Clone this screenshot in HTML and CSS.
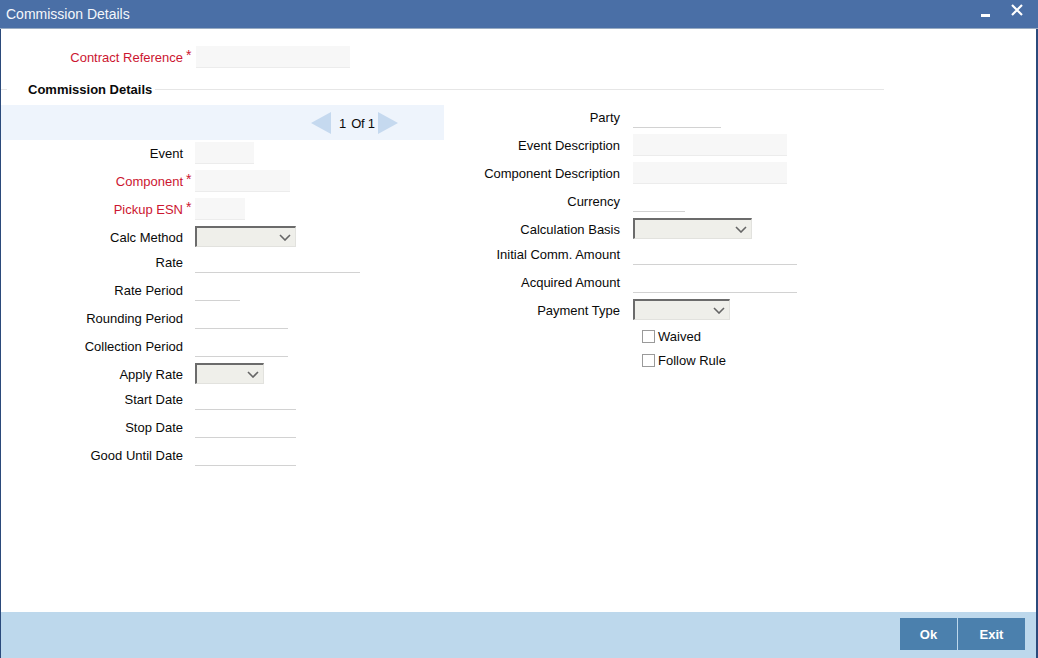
FILE: index.html
```html
<!DOCTYPE html>
<html>
<head>
<meta charset="utf-8">
<title>Commission Details</title>
<link rel="stylesheet" href="styles.css">
</head>
<body>
<div class="window">
  <div class="titlebar">
    <span class="title">Commission Details</span>
    <div class="win-ctrls">
      <span class="min-btn"></span>
      <svg class="close-btn" width="14" height="14" viewBox="0 0 14 14"><path d="M2 2 L12 12 M12 2 L2 12" stroke="#ffffff" stroke-width="2.2" fill="none"/></svg>
    </div>
  </div>
  <div class="frame">
    <div class="main">
      <div class="frow contract">
        <span class="lbl req">Contract Reference</span><span class="mark">*</span>
        <div class="inp filled" style="width:154px"></div>
      </div>
      <div class="legend">
        <span class="lline-s"></span>
        <span class="legend-text">Commission Details</span>
        <span class="lline"></span>
      </div>
      <div class="cols">
        <div class="col-left">
          <div class="pager">
            <svg class="arrow" width="20" height="22" viewBox="0 0 20 22"><path d="M20 0 L20 22 L0 11 Z" fill="#c5d9ef"/></svg>
            <span class="pg-num">1</span><span class="pg-of">Of 1</span>
            <svg class="arrow" width="20" height="22" viewBox="0 0 20 22"><path d="M0 0 L0 22 L20 11 Z" fill="#c5d9ef"/></svg>
          </div>
          <div class="form">
            <div class="frow"><span class="lbl">Event</span><span class="mark"></span><div class="inp filled" style="width:59px"></div></div>
            <div class="frow"><span class="lbl req">Component</span><span class="mark">*</span><div class="inp filled" style="width:95px"></div></div>
            <div class="frow"><span class="lbl req">Pickup ESN</span><span class="mark">*</span><div class="inp filled" style="width:50px"></div></div>
            <div class="frow srow"><span class="lbl">Calc Method</span><span class="mark"></span><div class="sel" style="width:101px"><svg width="12" height="7" viewBox="0 0 12 7"><path d="M1 1 L6 6 L11 1" stroke="#666" stroke-width="1.6" fill="none"/></svg></div></div>
            <div class="frow"><span class="lbl">Rate</span><span class="mark"></span><div class="inp uline" style="width:165px"></div></div>
            <div class="frow"><span class="lbl">Rate Period</span><span class="mark"></span><div class="inp uline" style="width:45px"></div></div>
            <div class="frow"><span class="lbl">Rounding Period</span><span class="mark"></span><div class="inp uline" style="width:93px"></div></div>
            <div class="frow"><span class="lbl">Collection Period</span><span class="mark"></span><div class="inp uline" style="width:93px"></div></div>
            <div class="frow srow"><span class="lbl">Apply Rate</span><span class="mark"></span><div class="sel" style="width:69px"><svg width="12" height="7" viewBox="0 0 12 7"><path d="M1 1 L6 6 L11 1" stroke="#666" stroke-width="1.6" fill="none"/></svg></div></div>
            <div class="frow"><span class="lbl">Start Date</span><span class="mark"></span><div class="inp uline" style="width:101px"></div></div>
            <div class="frow"><span class="lbl">Stop Date</span><span class="mark"></span><div class="inp uline" style="width:101px"></div></div>
            <div class="frow"><span class="lbl">Good Until Date</span><span class="mark"></span><div class="inp uline" style="width:101px"></div></div>
          </div>
        </div>
        <div class="col-right">
          <div class="frow"><span class="lbl">Party</span><span class="mark"></span><div class="inp uline" style="width:88px"></div></div>
          <div class="frow"><span class="lbl">Event Description</span><span class="mark"></span><div class="inp filled" style="width:154px"></div></div>
          <div class="frow"><span class="lbl">Component Description</span><span class="mark"></span><div class="inp filled" style="width:154px"></div></div>
          <div class="frow"><span class="lbl">Currency</span><span class="mark"></span><div class="inp uline" style="width:52px"></div></div>
          <div class="frow srow"><span class="lbl">Calculation Basis</span><span class="mark"></span><div class="sel" style="width:119px"><svg width="12" height="7" viewBox="0 0 12 7"><path d="M1 1 L6 6 L11 1" stroke="#666" stroke-width="1.6" fill="none"/></svg></div></div>
          <div class="frow"><span class="lbl">Initial Comm. Amount</span><span class="mark"></span><div class="inp uline" style="width:164px"></div></div>
          <div class="frow"><span class="lbl">Acquired Amount</span><span class="mark"></span><div class="inp uline" style="width:164px"></div></div>
          <div class="frow srow"><span class="lbl">Payment Type</span><span class="mark"></span><div class="sel" style="width:97px"><svg width="12" height="7" viewBox="0 0 12 7"><path d="M1 1 L6 6 L11 1" stroke="#666" stroke-width="1.6" fill="none"/></svg></div></div>
          <div class="crow"><span class="cbox"></span><span class="clbl">Waived</span></div>
          <div class="crow"><span class="cbox"></span><span class="clbl">Follow Rule</span></div>
        </div>
      </div>
    </div>
    <div class="footer">
      <button class="btn btn-ok">Ok</button>
      <button class="btn btn-exit">Exit</button>
    </div>
  </div>
</div>
</body>
</html>
```

FILE: styles.css
```css
* { box-sizing: border-box; }
html, body { margin: 0; padding: 0; background: #ffffff; }
body {
  font-family: "Liberation Sans", Arial, sans-serif;
  font-size: 13px;
  color: #0a0a0a;
}
.window {
  width: 1038px;
  height: 658px;
  display: flex;
  flex-direction: column;
  overflow: hidden;
}
.titlebar {
  height: 29px;
  flex: none;
  background: #4a6fa6;
  border-bottom: 1px solid #98abc2;
  display: flex;
  align-items: center;
  justify-content: space-between;
  padding: 0 0 1px 6px;
}
.title {
  color: #f4f7fb;
  font-size: 14px;
}
.win-ctrls {
  display: flex;
  align-items: center;
  height: 28px;
}
.min-btn {
  width: 9px;
  height: 3px;
  background: #ffffff;
  margin-top: 4px;
  margin-right: 20px;
}
.close-btn {
  margin-right: 14px;
  margin-top: -8px;
}
.frame {
  flex: 1;
  display: flex;
  flex-direction: column;
  border-left: 1px solid #2b4a7b;
  border-right: 2px solid #2b4a7b;
}
.main {
  flex: 1;
}
.frow {
  display: flex;
  align-items: flex-start;
  height: 28px;
}
.frow.srow { height: 25px; }
.lbl {
  line-height: 22px;
  padding-top: 1px;
  text-align: right;
  white-space: nowrap;
}
.lbl.req { color: #cc1631; }
.mark {
  line-height: 17px;
  padding-top: 1px;
  color: #cc1631;
  font-size: 14px;
  padding-left: 3px;
}
.contract { margin-top: 17px; }
.contract .lbl { width: 182px; }
.contract .mark { width: 13px; }
.col-left .lbl { width: 182px; }
.col-left .mark { width: 12px; }
.col-right .lbl { width: 176px; }
.col-right .mark { width: 13px; }
.inp {
  height: 22px;
}
.inp.filled {
  background: #f7f7f7;
  border-bottom: 1px solid #ececec;
}
.inp.uline {
  border-bottom: 1px solid #d2d2d2;
}
.sel {
  height: 21px;
  background: #efefea;
  border-top: 2px solid #6b6b6b;
  border-left: 2px solid #6b6b6b;
  border-right: 1px solid #e2e2de;
  border-bottom: 1px solid #e2e2de;
  display: flex;
  align-items: center;
  justify-content: flex-end;
  padding-right: 4px;
}
.legend {
  display: flex;
  align-items: center;
  height: 18px;
  margin-top: 6px;
  width: 883px;
}
.lline-s {
  width: 6px;
  height: 1px;
  background: #e6e6e6;
  margin-right: 21px;
}
.legend-text {
  font-weight: bold;
  margin-right: 3px;
  white-space: nowrap;
}
.lline {
  flex: 1;
  height: 1px;
  background: #e6e6e6;
}
.cols {
  display: flex;
  margin-top: 7px;
}
.col-left {
  width: 443px;
  flex: none;
}
.col-right {
  padding-top: 1px;
}
.pager {
  height: 35px;
  background: #eef4fc;
  display: flex;
  align-items: center;
  padding-left: 310px;
  padding-top: 1px;
}
.pg-num { margin-left: 8px; }
.pg-of { margin-left: 5px; margin-right: 3px; letter-spacing: -0.3px; }
.form { padding-top: 2px; }
.crow {
  display: flex;
  align-items: center;
  height: 24px;
  padding-left: 198px;
}
.cbox {
  width: 13px;
  height: 13px;
  border: 1px solid #9a9a9a;
  background: #ffffff;
  margin-right: 3px;
}
.clbl { line-height: 22px; padding-top: 1px; }
.footer {
  height: 46px;
  flex: none;
  background: #bdd8ec;
  display: flex;
  justify-content: flex-end;
  align-items: flex-start;
  padding-top: 6px;
  padding-right: 11px;
}
.btn {
  height: 32px;
  border: none;
  background: #4b80ad;
  color: #ffffff;
  font-family: "Liberation Sans", Arial, sans-serif;
  font-size: 13px;
  font-weight: bold;
  padding: 0;
  margin: 0;
}
.btn-ok { width: 57px; margin-right: 1px; }
.btn-exit { width: 67px; }
```
